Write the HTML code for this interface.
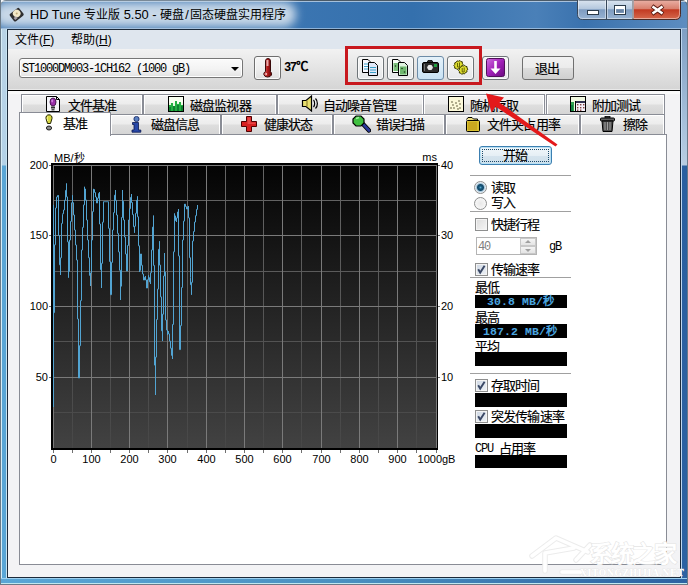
<!DOCTYPE html>
<html lang="zh-CN">
<head>
<meta charset="utf-8">
<style>
html,body{margin:0;padding:0;}
body{width:688px;height:585px;overflow:hidden;position:relative;background:#fff;font-family:"Liberation Sans",sans-serif;font-size:12px;color:#000;}
.a{position:absolute;box-sizing:border-box;}
.t{position:absolute;white-space:nowrap;line-height:1;}
.tab{border:1px solid #898c95;border-bottom:none;background:linear-gradient(180deg,#f4f4f4 0%,#ececec 45%,#dedede 50%,#d4d4d4 100%);box-shadow:inset 1px 1px 0 #fff,inset -1px 0 0 #fff;}
.chk{width:13px;height:13px;border:1px solid #8e8f8f;background:linear-gradient(135deg,#cfd8e4 0%,#eef2f6 100%);box-shadow:inset 0 0 0 1px #f4f4f4;}
.lcd{font-family:"Liberation Mono",monospace;font-weight:bold;font-size:11.5px;letter-spacing:0.1px;color:#4aa6e0;}
.tt{font-size:13px;letter-spacing:-0.85px;font-weight:500;-webkit-text-stroke:0.15px #000;}
</style>
</head>
<body>
<!-- window frame -->
<div class="a" style="left:0;top:0;width:688px;height:585px;border-radius:6px 6px 0 0;background:linear-gradient(90deg,#3a74b0 0%,#3c76b2 40%,#3470ad 60%,#4a80b8 78%,#3a72ae 85%,#5d8dc0 100%);border:1px solid #4a5a68;overflow:hidden;"></div>
<div class="a" style="left:1px;top:1px;width:686px;height:1px;background:rgba(255,255,255,0.55);border-radius:6px 6px 0 0;"></div>
<!-- title glow -->
<div class="a" style="left:-6px;top:2px;width:302px;height:25px;border-radius:12px;background:rgba(208,221,235,0.95);filter:blur(5px);"></div>
<!-- left frame lower -->
<div class="a" style="left:1px;top:29px;width:6px;height:555px;background:linear-gradient(180deg,#b9d3e6 0,#b4d2e8 136px,#5aa6d6 137px,#5aa6d6 100%);border-left:1px solid #d6ecf6;border-right:1px solid #c8e4f2;"></div>
<div class="a" style="left:0;top:0;width:1px;height:585px;background:#6a7a88;"></div>
<!-- right frame lower -->
<div class="a" style="left:681px;top:29px;width:6px;height:555px;background:linear-gradient(180deg,#7f9fc4 0,#a9c2dc 100px,#b8cde2 136px,#2a5fa0 137px,#2d62a2 100%);border-left:1px solid #c0d8f0;"></div>
<div class="a" style="left:687px;top:0;width:1px;height:585px;background:#6a7a88;"></div>
<!-- bottom frame -->
<div class="a" style="left:1px;top:578px;width:686px;height:6px;background:linear-gradient(90deg,#5aa6d6 0%,#4a90c0 50%,#2d62a2 100%);border-top:1px solid #9cd0f0;border-bottom:1px solid #c0e8f0;"></div>
<div class="a" style="left:0;top:584px;width:688px;height:1px;background:#6a7a88;"></div>
<div class="a" style="left:1px;top:28px;width:686px;height:1px;background:rgba(200,220,240,0.6);"></div>
<!-- title icon -->
<svg class="a" style="left:8px;top:6px" width="17" height="17" viewBox="0 0 17 17">
<g transform="rotate(-38 8.5 8.5)"><rect x="2.5" y="4" width="12" height="9.5" rx="1.5" fill="#2e2e30"/><circle cx="9.3" cy="7.8" r="3.8" fill="#f2e8c8"/><circle cx="9.3" cy="7.8" r="1" fill="#c0a878"/><rect x="4" y="9.5" width="3" height="2.6" fill="#a8a0a8"/></g>
</svg>
<div class="t" style="left:30px;top:9px;font-size:12px;color:#000;"><span style="font-size:12.8px">HD Tune </span>专业版<span style="font-size:12.9px"> 5.50 - </span>硬盘<span style="font-size:12.8px;margin:0 1px">/</span>固态硬盘实用程序</div>
<!-- window controls -->
<svg class="a" style="left:577px;top:0" width="106" height="21" viewBox="0 0 106 21">
<defs>
<linearGradient id="wb" x1="0" y1="0" x2="0" y2="1"><stop offset="0" stop-color="#dbe5f0"/><stop offset="0.45" stop-color="#b4c8de"/><stop offset="0.5" stop-color="#7e9cc0"/><stop offset="1" stop-color="#98b4d4"/></linearGradient>
<linearGradient id="wc" x1="0" y1="0" x2="0" y2="1"><stop offset="0" stop-color="#eab1a6"/><stop offset="0.45" stop-color="#d8806e"/><stop offset="0.5" stop-color="#c23a22"/><stop offset="1" stop-color="#d66a4e"/></linearGradient>
</defs>
<path d="M0.5 0V14.5Q0.5 19.5 5.5 19.5H56V0Z" fill="url(#wb)" stroke="#37475a"/>
<path d="M56 0H103.5V14.5Q103.5 19.5 98.5 19.5H56Z" fill="url(#wc)" stroke="#4a2a25"/>
<path d="M29.5 0V19M56 0V19" stroke="#37475a"/>
<path d="M1.5 0V14Q1.5 18.5 5.5 18.5H28.5V0M30.5 0V18.5H55.5V0M56.5 0V18.5H98.5Q102.5 18.5 102.5 14.5V0" fill="none" stroke="rgba(255,255,255,0.45)"/>
<rect x="10.5" y="10.5" width="11" height="4" fill="#fff" stroke="#2a3a4a"/>
<rect x="37.5" y="5.5" width="11" height="9" fill="none" stroke="#2a3a4a"/>
<rect x="38.5" y="6.5" width="9" height="7" fill="none" stroke="#fff" stroke-width="1"/>
<rect x="39" y="7" width="8" height="2" fill="#fff"/>
<rect x="39.5" y="9.5" width="7" height="3" fill="#6a84a4"/>
<path d="M75 6L86 14M86 6L75 14" stroke="#5a1a10" stroke-width="4.4"/>
<path d="M75.5 6.5L85.5 13.5M85.5 6.5L75.5 13.5" stroke="#fff" stroke-width="2.6"/>
</svg>
<!-- client area -->
<div class="a" style="left:7px;top:29px;width:674px;height:549px;border:1px solid #1c2a3a;background:#f3f3f5;"></div>
<!-- menu bar -->
<div class="a" style="left:8px;top:30px;width:672px;height:19px;background:#dfe6ee;"></div>
<div class="t" style="left:15px;top:34px;">文件(<u>F</u>)</div>
<div class="t" style="left:71px;top:34px;">帮助(<u>H</u>)</div>
<!-- toolbar -->
<div class="a" style="left:8px;top:49px;width:672px;height:40px;background:linear-gradient(180deg,#f2f2f2 0%,#d5d5d5 100%);"></div>
<div class="a" style="left:8px;top:89px;width:672px;height:1px;background:#e8e8e8;"></div>
<div class="a" style="left:8px;top:90px;width:672px;height:1px;background:#000;"></div>
<div class="a" style="left:8px;top:91px;width:672px;height:3px;background:#fafafa;"></div>

<!-- combo -->
<div class="a" style="left:19px;top:58px;width:224px;height:20px;border:1px solid #767676;border-radius:3px;background:linear-gradient(180deg,#fbfbfb 0%,#f2f2f2 60%,#e2e2e2 100%);box-shadow:inset 0 0 0 1px #fff;"></div>
<div class="t" style="left:22px;top:63px;font-family:'Liberation Mono',monospace;font-size:12px;letter-spacing:-1.2px;">ST1000DM003-1CH162 (1000 gB)</div>
<div class="a" style="left:231px;top:67px;width:0;height:0;border-left:4px solid transparent;border-right:4px solid transparent;border-top:4px solid #000;"></div>

<!-- thermometer button -->
<div class="a" style="left:254px;top:56px;width:27px;height:24px;border:1px solid #6e6e6e;border-radius:3px;background:linear-gradient(180deg,#f6f6f6 0%,#ececec 60%,#e0e0e0 100%);box-shadow:inset 0 0 0 1px #fafafa;"></div>
<svg class="a" style="left:260px;top:57px" width="14" height="21" viewBox="0 0 14 21">
<defs><linearGradient id="th" x1="0" y1="0" x2="1" y2="0"><stop offset="0" stop-color="#e07070"/><stop offset="0.5" stop-color="#b01818"/><stop offset="1" stop-color="#600808"/></linearGradient></defs>
<path d="M5.5 4Q5.5 1.5 8 1.5Q10.5 1.5 10.5 4V14.5Q12 16 11.5 18Q10.5 20 7.5 20Q4.5 20 3.8 17.5Q3.5 15.5 5.5 14.5Z" fill="url(#th)" stroke="#3a0a0a" stroke-width="1"/>
<rect x="6.5" y="3" width="2" height="6" fill="#f4d0d0" opacity="0.8"/>
<circle cx="6.2" cy="17" r="1" fill="#f4c0c0"/>
</svg>
<div class="t" style="left:284px;top:62px;font-family:'Liberation Mono',monospace;font-size:12px;font-weight:bold;letter-spacing:-1.5px;">37</div>
<div class="t" style="left:296px;top:61px;font-size:12.5px;font-weight:bold;">℃</div>
<!-- red rectangle -->
<div class="a" style="left:345px;top:46px;width:137px;height:39px;border:3px solid #c8181e;"></div>
<!-- toolbar buttons -->
<div class="a" style="left:357px;top:56px;width:27px;height:24px;border:1px solid #6e7478;border-radius:3px;background:linear-gradient(180deg,#f6f6f6 0%,#e6e8ea 100%);box-shadow:inset 0 0 0 1px #fafafa;"></div>
<div class="a" style="left:387px;top:56px;width:27px;height:24px;border:1px solid #6e7478;border-radius:3px;background:linear-gradient(180deg,#f6f6f6 0%,#e6e8ea 100%);box-shadow:inset 0 0 0 1px #fafafa;"></div>
<div class="a" style="left:417px;top:56px;width:27px;height:24px;border:1px solid #6d8ca8;border-radius:3px;background:linear-gradient(180deg,#e6f2fa 0%,#c8e2f4 100%);"></div>
<div class="a" style="left:447px;top:56px;width:27px;height:24px;border:1px solid #6e7478;border-radius:3px;background:linear-gradient(180deg,#f6f6f6 0%,#e6e8ea 100%);box-shadow:inset 0 0 0 1px #fafafa;"></div>
<div class="a" style="left:482px;top:56px;width:27px;height:24px;border:1px solid #6e7478;border-radius:3px;background:linear-gradient(180deg,#f6f6f6 0%,#e6e8ea 100%);box-shadow:inset 0 0 0 1px #fafafa;"></div>
<!-- exit button -->
<div class="a" style="left:522px;top:56px;width:52px;height:24px;border:1px solid #707070;border-radius:3px;background:linear-gradient(180deg,#f2f2f2 0%,#ebebeb 50%,#dddddd 51%,#cfcfcf 100%);"></div>
<div class="t tt" style="left:535px;top:62px;">退出</div>


<!-- tabs row 1 -->
<div class="a tab" style="left:21px;top:94px;width:122px;height:21px;"></div>
<div class="a tab" style="left:143px;top:94px;width:134px;height:21px;"></div>
<div class="a tab" style="left:277px;top:94px;width:147px;height:21px;"></div>
<div class="a tab" style="left:423px;top:94px;width:122px;height:21px;"></div>
<div class="a tab" style="left:546px;top:94px;width:119px;height:21px;"></div>
<div class="t tt" style="left:68px;top:99px;">文件基准</div>
<div class="t tt" style="left:190px;top:99px;">磁盘监视器</div>
<div class="t tt" style="left:323px;top:99px;">自动噪音管理</div>
<div class="t tt" style="left:470px;top:99px;">随机存取</div>
<div class="t tt" style="left:592px;top:99px;">附加测试</div>
<!-- tabs row 2 -->
<div class="a tab" style="left:110px;top:114px;width:111px;height:21px;"></div>
<div class="a tab" style="left:221px;top:114px;width:112px;height:21px;"></div>
<div class="a tab" style="left:333px;top:114px;width:112px;height:21px;"></div>
<div class="a tab" style="left:445px;top:114px;width:135px;height:21px;"></div>
<div class="a tab" style="left:580px;top:114px;width:85px;height:21px;"></div>
<div class="t tt" style="left:151px;top:118px;">磁盘信息</div>
<div class="t tt" style="left:264px;top:118px;">健康状态</div>
<div class="t tt" style="left:376px;top:118px;">错误扫描</div>
<div class="t tt" style="left:487px;top:118px;">文件夹占用率</div>
<div class="t tt" style="left:623px;top:118px;">擦除</div>
<!-- panel -->
<div class="a" style="left:19px;top:134px;width:648px;height:431px;border:1px solid #898c95;background:#fff;"></div>
<!-- selected tab -->
<div class="a" style="left:19px;top:112px;width:92px;height:24px;border:1px solid #898c95;border-bottom:none;background:#fff;"></div>
<div class="t tt" style="left:63px;top:117px;">基准</div>



<!-- tab icons -->
<svg class="a" style="left:46px;top:96px" width="15" height="16" viewBox="0 0 15 16">
<path d="M0.5 0.5H10.5L13.5 3.5V15.5H0.5Z" fill="#f4f4f8" stroke="#000"/><path d="M10.5 0.5V3.5H13.5" fill="none" stroke="#000"/>
<ellipse cx="7" cy="6" rx="3" ry="4" fill="#9a30a8" stroke="#300838" stroke-width="0.8"/><ellipse cx="6.2" cy="4.8" rx="1" ry="1.6" fill="#d080e0"/>
<rect x="5" y="10.5" width="4" height="2" fill="#303030"/><rect x="5.5" y="13" width="3" height="1.5" fill="#505050"/>
</svg>
<svg class="a" style="left:168px;top:96px" width="16" height="16" viewBox="0 0 16 16">
<rect x="0.5" y="0.5" width="15" height="15" fill="#eaf8e0" stroke="#000"/>
<rect x="1" y="1" width="14" height="6" fill="#f8fff0"/>
<path d="M1 9H3V7H5V10H7V5H9V8H11V6H13V9H15V15H1Z" fill="#22b040"/>
<path d="M1 11H3V15H1ZM5 10H7V15H5ZM9 9H11V15H9ZM13 10H15V15H13Z" fill="#108030"/>
</svg>
<svg class="a" style="left:301px;top:95px" width="18" height="17" viewBox="0 0 18 17">
<path d="M1.5 5.5H5L10.5 1V16L5 11.5H1.5Z" fill="#e8e070" stroke="#000" stroke-width="1.2"/>
<path d="M6 5.5V11.5" stroke="#807020" stroke-width="1"/>
<path d="M12.5 5C14 6.5 14 10.5 12.5 12" fill="none" stroke="#000" stroke-width="1.2"/>
<path d="M14.5 3.5C17 6 17 11 14.5 13.5" fill="none" stroke="#000" stroke-width="1.2"/>
</svg>
<svg class="a" style="left:448px;top:96px" width="16" height="16" viewBox="0 0 16 16">
<rect x="0.5" y="0.5" width="15" height="15" fill="#fbf8d8" stroke="#000"/>
<g fill="#2a2408"><circle cx="3" cy="12" r="0.65"/><circle cx="5" cy="9" r="0.65"/><circle cx="6" cy="12" r="0.65"/><circle cx="8" cy="7" r="0.65"/><circle cx="9" cy="10" r="0.65"/><circle cx="11" cy="5" r="0.65"/><circle cx="12" cy="8" r="0.65"/><circle cx="12" cy="12" r="0.65"/><circle cx="10" cy="13" r="0.65"/><circle cx="4" cy="6" r="0.65"/></g>
</svg>
<svg class="a" style="left:570px;top:96px" width="16" height="16" viewBox="0 0 16 16">
<rect x="0.5" y="0.5" width="15" height="15" fill="#f0f8e0" stroke="#000"/>
<path d="M1 6H4V15H1Z" fill="#30a050"/><path d="M1 9H3V15H1Z" fill="#108040"/>
<rect x="5.5" y="5.5" width="10" height="10" fill="#f4f0f8" stroke="#000"/><rect x="6" y="5" width="9" height="2" fill="#303050"/>
<g fill="#804040"><rect x="7" y="8" width="1.4" height="1.4"/><rect x="10" y="8" width="1.4" height="1.4"/><rect x="13" y="8" width="1.4" height="1.4"/><rect x="7" y="11" width="1.4" height="1.4"/><rect x="10" y="11" width="1.4" height="1.4"/><rect x="13" y="11" width="1.4" height="1.4"/><rect x="7" y="13.5" width="1.4" height="1.4"/><rect x="10" y="13.5" width="1.4" height="1.4"/></g>
</svg>
<svg class="a" style="left:45px;top:114px" width="8" height="17" viewBox="0 0 8 17">
<path d="M4 0.8C6.2 0.8 7.3 2.5 7 4.5L5.5 9.5H2.5L1 4.5C0.7 2.5 1.8 0.8 4 0.8Z" fill="#d8d840" stroke="#202000" stroke-width="1"/>
<path d="M3 2.5C2 3 2.2 5 2.8 7" stroke="#f8f8a0" stroke-width="1" fill="none"/>
<ellipse cx="4" cy="14" rx="2.6" ry="2" fill="#909090" stroke="#202020" stroke-width="1"/>
</svg>
<svg class="a" style="left:131px;top:116px" width="11" height="17" viewBox="0 0 11 17">
<circle cx="5.5" cy="3" r="2.6" fill="#5a80c0" stroke="#102060" stroke-width="0.8"/>
<path d="M1.5 6.5H7.5V14H9.8V16.2H1V14H3V8.5H1.5Z" fill="#2848a8" stroke="#0a1850" stroke-width="0.8"/>
</svg>
<svg class="a" style="left:240px;top:116px" width="18" height="16" viewBox="0 0 18 16">
<path d="M6.5 0.5H11.5V5.5H16.5V10.5H11.5V15.5H6.5V10.5H1.5V5.5H6.5Z" fill="#d82020" stroke="#500000" stroke-width="1"/>
<path d="M7.5 1.5H10.5V6.5H15.5V8H7.5Z" fill="#f06060" opacity="0.6"/>
</svg>
<svg class="a" style="left:352px;top:115px" width="19" height="18" viewBox="0 0 19 18">
<path d="M11 9L17 15.5" stroke="#000" stroke-width="4.4" stroke-linecap="round"/>
<path d="M11 9L17 15.5" stroke="#2a3a9a" stroke-width="2.6" stroke-linecap="round"/>
<path d="M4 1H9L12 4V8L9 11H4L1 8V4Z" fill="#40c040" stroke="#000" stroke-width="1.2"/>
<path d="M4 3.5L7 2.5" stroke="#a0f0a0" stroke-width="1.5"/>
</svg>
<svg class="a" style="left:465px;top:116px" width="16" height="16" viewBox="0 0 16 16">
<path d="M1.5 3.5L3 1.5H7L8.5 3H12.5V5" fill="#f0e080" stroke="#000" stroke-width="1"/>
<rect x="1.5" y="4.5" width="13" height="11" rx="1" fill="#d8c030" stroke="#000" stroke-width="1"/>
<rect x="3" y="6" width="9" height="8" fill="#c8a820"/>
</svg>
<svg class="a" style="left:600px;top:116px" width="15" height="16" viewBox="0 0 15 16">
<rect x="5" y="0.5" width="5" height="2" fill="#404040" stroke="#000" stroke-width="0.8"/>
<rect x="0.5" y="2" width="14" height="3" rx="1" fill="#606060" stroke="#000" stroke-width="1"/>
<path d="M2 5H13L12 15.5H3Z" fill="#505050" stroke="#000" stroke-width="1"/>
<path d="M5 6V14M7.5 6V14M10 6V14" stroke="#a0a0a0" stroke-width="1"/>
</svg>
<!-- toolbar icons -->
<svg class="a" style="left:362px;top:59px" width="17" height="17" viewBox="0 0 17 17">
<path d="M0.5 0.5H6L8 2.5V13.5H0.5Z" fill="#f8f8ff" stroke="#000"/>
<path d="M2 5H6.5M2 7.5H6.5M2 10H6.5" stroke="#3aa0c8" stroke-width="1.2"/>
<path d="M6.5 3.5H12.5L15.5 6.5V16.5H6.5Z" fill="#e0e8f8" stroke="#000"/>
<path d="M8 8.5H14M8 11H14M8 13.5H14" stroke="#3aa0c8" stroke-width="1.2"/>
</svg>
<svg class="a" style="left:392px;top:59px" width="17" height="17" viewBox="0 0 17 17">
<path d="M0.5 0.5H6L8 2.5V13.5H0.5Z" fill="#f8fff8" stroke="#000"/>
<rect x="1.5" y="4" width="5" height="8" fill="#7cc07c"/><circle cx="3.5" cy="7" r="0.8" fill="#204020"/>
<path d="M6.5 3.5H12.5L15.5 6.5V16.5H6.5Z" fill="#e0f4e0" stroke="#000"/>
<rect x="8" y="7.5" width="6.5" height="8" fill="#70b870"/><circle cx="10" cy="9.5" r="0.8" fill="#204020"/><circle cx="12.5" cy="13" r="0.8" fill="#204020"/>
</svg>
<svg class="a" style="left:422px;top:60px" width="17" height="14" viewBox="0 0 17 14">
<path d="M5 2.5L6 0.5H10L11 2.5Z" fill="#303030" stroke="#000" stroke-width="0.8"/>
<rect x="0.5" y="2.5" width="16" height="10" rx="1.5" fill="#2a2a2a" stroke="#000"/>
<circle cx="8" cy="7.5" r="3.3" fill="#e8e8e8" stroke="#000" stroke-width="0.8"/>
<rect x="12" y="4" width="3" height="3" fill="#20a040"/>
<rect x="2" y="4" width="1" height="7" fill="#707070"/>
</svg>
<svg class="a" style="left:452px;top:59px" width="18" height="17" viewBox="0 0 18 17">
<polygon points="10.3,2.8 10.3,4.3 11.2,5.3 10.2,6.6 10.3,8.1 8.8,8.7 7.9,10.1 6.4,9.8 5.0,10.5 4.1,9.4 2.7,9.2 2.7,7.7 1.8,6.7 2.8,5.4 2.7,3.9 4.2,3.3 5.1,1.9 6.6,2.2 8.0,1.5 8.9,2.6" fill="#dede30" stroke="#3a3a00" stroke-width="1"/>
<path d="M5.5 4V8H7.5V3.5" stroke="#5a5a00" stroke-width="0.9" fill="none"/>
<polygon points="15.0,7.6 15.0,9.1 15.9,10.1 14.9,11.4 15.0,12.9 13.5,13.5 12.6,14.9 11.1,14.6 9.7,15.3 8.8,14.2 7.4,14.0 7.4,12.5 6.5,11.5 7.5,10.2 7.4,8.7 8.9,8.1 9.8,6.7 11.3,7.0 12.7,6.3 13.6,7.4" fill="#dede30" stroke="#3a3a00" stroke-width="1"/>
<path d="M10.2 9V13H12.2V8.5" stroke="#5a5a00" stroke-width="0.9" fill="none"/>
</svg>
<svg class="a" style="left:486px;top:58px" width="19" height="19" viewBox="0 0 19 19">
<defs><linearGradient id="pg" x1="0" y1="0" x2="1" y2="1"><stop offset="0" stop-color="#d070e0"/><stop offset="0.5" stop-color="#a020b8"/><stop offset="1" stop-color="#6a0a80"/></linearGradient></defs>
<rect x="0.5" y="0.5" width="18" height="18" rx="2" fill="url(#pg)" stroke="#50105a"/>
<path d="M8.2 3H10.8V10.5H14.5L9.5 16L4.5 10.5H8.2Z" fill="#fff"/>
</svg>
<!-- red arrow -->
<svg class="a" style="left:0;top:0" width="688" height="585" viewBox="0 0 688 585">
<path d="M486 93.5L504 97.5L499.5 102.5L557.5 144.5L555.5 146.5L495.5 106.5L491.5 112.5Z" fill="#e3191b"/>
</svg>
<!-- right panel -->
<div class="a" style="left:479px;top:146px;width:73px;height:19px;border:1px solid #3c7fb1;border-radius:3px;background:linear-gradient(180deg,#f2f7fa 0%,#e6eff5 50%,#d6e4ee 51%,#cfdfea 100%);box-shadow:inset 0 0 0 1px #b8e0f4;"></div>
<div class="a" style="left:482px;top:149px;width:67px;height:13px;border:1px dotted #1a4a6a;"></div>
<div class="t tt" style="left:503px;top:149px;">开始</div>
<div class="a" style="left:470px;top:175px;width:101px;height:1px;background:#a0a0a0;"></div>
<div class="a" style="left:474px;top:181px;width:13px;height:13px;border-radius:50%;border:1px solid #8e8f8f;background:radial-gradient(circle at 50% 50%,#5aaccc 0,#1a5a80 1.5px,#154a6a 3px,#a8c8dc 4px,#e0eaf2 5px,#f4f4f4 6px);"></div>
<div class="t tt" style="left:491px;top:181px;">读取</div>
<div class="a" style="left:474px;top:197px;width:13px;height:13px;border-radius:50%;border:1px solid #8e8f8f;background:radial-gradient(circle at 50% 50%,#e8e8e8 0,#f8f8f8 6px);"></div>
<div class="t tt" style="left:491px;top:196px;">写入</div>
<div class="a" style="left:470px;top:211px;width:101px;height:1px;background:#a0a0a0;"></div>
<div class="a" style="left:475px;top:218px;width:13px;height:13px;border:1px solid #8e8f8f;background:linear-gradient(135deg,#dcdcdc 0%,#f6f6f6 100%);box-shadow:inset 0 0 0 1px #f4f4f4;"></div>
<div class="t tt" style="left:491px;top:218px;">快捷行程</div>
<div class="a" style="left:476px;top:237px;width:61px;height:18px;border:1px solid #b4b4b4;background:#fff;"></div>
<div class="t" style="left:478px;top:241px;font-family:'Liberation Mono',monospace;font-size:12px;letter-spacing:-1.2px;color:#808080;">40</div>
<div class="a" style="left:520px;top:238px;width:16px;height:8px;border:1px solid #c8c8c8;background:linear-gradient(180deg,#f4f4f4,#e4e4e4);"></div>
<div class="a" style="left:520px;top:246px;width:16px;height:8px;border:1px solid #c8c8c8;background:linear-gradient(180deg,#f4f4f4,#e4e4e4);"></div>
<div class="a" style="left:525px;top:240px;width:0;height:0;border-left:3px solid transparent;border-right:3px solid transparent;border-bottom:3px solid #a0a0a0;"></div>
<div class="a" style="left:525px;top:249px;width:0;height:0;border-left:3px solid transparent;border-right:3px solid transparent;border-top:3px solid #a0a0a0;"></div>
<div class="t" style="left:549px;top:241px;font-family:'Liberation Mono',monospace;font-size:12px;letter-spacing:-1.2px;">gB</div>
<div class="a chk" style="left:475px;top:263px;"><svg width="11" height="11" viewBox="0 0 11 11" style="position:absolute;left:0;top:0"><path d="M2.2 5.2L4.2 8.6L8.6 1.8" fill="none" stroke="#3a4866" stroke-width="1.9" stroke-linejoin="miter"/></svg></div>
<div class="t tt" style="left:491px;top:263px;">传输速率</div>
<div class="a" style="left:470px;top:277px;width:101px;height:1px;background:#a0a0a0;"></div>
<div class="t tt" style="left:475px;top:281px;">最低</div>
<div class="a" style="left:475px;top:295px;width:92px;height:13px;background:#000;"></div>
<div class="t lcd" style="left:487px;top:296px;">30.8 MB/秒</div>
<div class="t tt" style="left:475px;top:311px;">最高</div>
<div class="a" style="left:475px;top:324px;width:92px;height:14px;background:#000;"></div>
<div class="t lcd" style="left:483px;top:326px;">187.2 MB/秒</div>
<div class="t tt" style="left:475px;top:340px;">平均</div>
<div class="a" style="left:475px;top:352px;width:92px;height:14px;background:#000;"></div>
<div class="a" style="left:470px;top:373px;width:101px;height:1px;background:#a0a0a0;"></div>
<div class="a chk" style="left:475px;top:379px;"><svg width="11" height="11" viewBox="0 0 11 11" style="position:absolute;left:0;top:0"><path d="M2.2 5.2L4.2 8.6L8.6 1.8" fill="none" stroke="#3a4866" stroke-width="1.9" stroke-linejoin="miter"/></svg></div>
<div class="t tt" style="left:491px;top:379px;">存取时间</div>
<div class="a" style="left:475px;top:393px;width:92px;height:14px;background:#000;"></div>
<div class="a chk" style="left:475px;top:410px;"><svg width="11" height="11" viewBox="0 0 11 11" style="position:absolute;left:0;top:0"><path d="M2.2 5.2L4.2 8.6L8.6 1.8" fill="none" stroke="#3a4866" stroke-width="1.9" stroke-linejoin="miter"/></svg></div>
<div class="t tt" style="left:491px;top:410px;">突发传输速率</div>
<div class="a" style="left:475px;top:424px;width:92px;height:14px;background:#000;"></div>
<div class="t" style="left:475px;top:443px;font-family:'Liberation Mono',monospace;font-size:12px;letter-spacing:-1.2px;">CPU</div>
<div class="t tt" style="left:499px;top:442px;">占用率</div>
<div class="a" style="left:475px;top:455px;width:92px;height:13px;background:#000;"></div>
<!-- chart -->
<svg class="a" style="left:0;top:0" width="688" height="585" viewBox="0 0 688 585">
<defs><linearGradient id="mg" gradientUnits="userSpaceOnUse" x1="0" y1="165" x2="0" y2="448"><stop offset="0" stop-color="#666"/><stop offset="1" stop-color="#474747"/></linearGradient><linearGradient id="bg" x1="0" y1="0" x2="0" y2="1"><stop offset="0" stop-color="#040404"/><stop offset="1" stop-color="#424242"/></linearGradient></defs>
<rect x="51" y="163" width="387" height="287" fill="#000"/>
<rect x="53" y="165" width="384" height="283" fill="url(#bg)"/>
<path d="M72.5 165V448 M110.5 165V448 M148.5 165V448 M187.5 165V448 M225.5 165V448 M263.5 165V448 M301.5 165V448 M340.5 165V448 M378.5 165V448 M416.5 165V448 M53 200.5H437 M53 271.5H437 M53 341.5H437 M53 412.5H437" stroke="url(#mg)" stroke-width="1" fill="none"/><path d="M53.5 165V448 M91.5 165V448 M129.5 165V448 M167.5 165V448 M206.5 165V448 M244.5 165V448 M282.5 165V448 M321.5 165V448 M359.5 165V448 M397.5 165V448 M436.5 165V448 M53 165.5H437 M53 235.5H437 M53 306.5H437 M53 377.5H437" stroke="#7a7a7a" stroke-width="1" fill="none"/>
<path d="M53.5 450V453 M72.5 450V453 M91.5 450V453 M110.5 450V453 M129.5 450V453 M148.5 450V453 M167.5 450V453 M187.5 450V453 M206.5 450V453 M225.5 450V453 M244.5 450V453 M263.5 450V453 M282.5 450V453 M301.5 450V453 M321.5 450V453 M340.5 450V453 M359.5 450V453 M378.5 450V453 M397.5 450V453 M416.5 450V453 M436.5 450V453 M49 165.5H51 M438 165.5H440 M49 235.5H51 M438 235.5H440 M49 306.5H51 M438 306.5H440 M49 377.5H51 M438 377.5H440 " stroke="#707070" stroke-width="1" fill="none"/>
<path d="M51 163H438M51 164H438M51 163V450M52 163V450M51 448H438M51 449H438M437.5 163V450" stroke="#000" stroke-width="1" fill="none" shape-rendering="crispEdges"/>
<!--poly 53.5,407.0 54.3,256.0 55.3,240.0 55.6,218.0 56.4,198.0 58.1,195.3 58.6,215.0 59.4,256.0 60.7,275.0 61.5,229.0 62.8,214.5 64.0,210.0 66.7,183.5 68.8,277.6 70.0,240.0 72.4,195.3 74.0,215.0 77.0,260.0 79.0,378.0 80.3,336.0 82.0,250.0 84.8,186.8 86.0,200.0 88.0,240.0 90.6,286.0 92.0,240.0 93.8,188.9 95.5,194.0 97.0,203.0 99.3,192.0 101.4,288.0 103.5,201.7 108.2,201.7 111.0,294.7 113.0,230.0 115.3,190.0 117.0,215.0 120.2,274.0 120.8,300.0 122.4,190.0 124.0,220.0 127.0,271.0 129.0,220.0 131.3,194.0 134.5,232.7 137.3,196.4 139.9,272.0 141.0,254.0 142.5,271.0 144.0,280.0 145.5,276.0 147.0,288.0 148.5,275.5 150.5,284.0 152.0,250.0 153.5,215.6 155.3,395.0 156.5,330.0 157.5,309.0 159.2,241.3 160.5,280.0 162.3,341.0 164.6,253.0 166.0,320.0 167.5,335.0 168.6,331.0 172.5,359.0 173.5,290.0 174.5,213.5 176.3,222.0 178.5,209.0 180.0,349.6 181.4,316.0 183.0,240.0 184.9,204.0 187.0,209.0 188.7,206.0 190.5,277.6 191.7,294.7 193.0,241.0 195.0,222.0 197.7,205.0 --><path d="M53.5 205.0 L53.5 205.0 L53.5 407.0 L53.5 312.6 L54.5 312.6 L54.5 256.0 L54.5 244.8 L55.5 244.8 L55.5 240.0 L55.5 218.0 L55.5 208.0 L56.5 208.0 L56.5 198.0 L56.5 197.0 L57.5 197.0 L57.5 195.5 L58.5 195.5 L58.5 195.3 L58.5 215.0 L58.5 235.5 L59.5 235.5 L59.5 256.0 L59.5 264.8 L60.5 264.8 L60.5 275.0 L60.5 257.8 L61.5 257.8 L61.5 229.0 L61.5 223.4 L62.5 223.4 L62.5 214.5 L62.5 213.8 L63.5 213.8 L63.5 210.0 L64.5 210.0 L64.5 200.2 L65.5 200.2 L65.5 190.4 L66.5 190.4 L66.5 183.5 L66.5 196.9 L67.5 196.9 L67.5 241.8 L68.5 241.8 L68.5 277.6 L68.5 271.3 L69.5 271.3 L69.5 240.0 L70.5 240.0 L70.5 221.4 L71.5 221.4 L71.5 202.8 L72.5 202.8 L72.5 195.3 L72.5 202.7 L73.5 202.7 L73.5 215.0 L74.5 215.0 L74.5 230.0 L75.5 230.0 L75.5 245.0 L76.5 245.0 L76.5 260.0 L77.5 260.0 L77.5 319.0 L78.5 319.0 L78.5 378.0 L79.5 378.0 L79.5 345.7 L80.5 345.7 L80.5 336.0 L80.5 300.6 L81.5 300.6 L81.5 250.0 L82.5 250.0 L82.5 227.4 L83.5 227.4 L83.5 204.9 L84.5 204.9 L84.5 186.8 L84.5 189.0 L85.5 189.0 L85.5 200.0 L86.5 200.0 L86.5 220.0 L87.5 220.0 L87.5 240.0 L88.5 240.0 L88.5 257.7 L89.5 257.7 L89.5 275.4 L90.5 275.4 L90.5 286.0 L90.5 272.9 L91.5 272.9 L91.5 240.0 L92.5 240.0 L92.5 211.6 L93.5 211.6 L93.5 188.9 L93.5 189.5 L94.5 189.5 L94.5 192.5 L95.5 192.5 L95.5 194.0 L95.5 197.0 L96.5 197.0 L96.5 203.0 L97.5 203.0 L97.5 198.2 L98.5 198.2 L98.5 193.4 L99.5 193.4 L99.5 192.0 L99.5 224.0 L100.5 224.0 L100.5 269.7 L101.5 269.7 L101.5 288.0 L101.5 263.3 L102.5 263.3 L102.5 222.2 L103.5 222.2 L103.5 201.7 L104.5 201.7 L105.5 201.7 L106.5 201.7 L107.5 201.7 L108.5 201.7 L108.5 228.3 L109.5 228.3 L109.5 261.5 L110.5 261.5 L110.5 294.7 L111.5 294.7 L111.5 262.4 L112.5 262.4 L112.5 230.0 L113.5 230.0 L113.5 212.6 L114.5 212.6 L114.5 195.2 L115.5 195.2 L115.5 190.0 L115.5 200.3 L116.5 200.3 L116.5 215.0 L117.5 215.0 L117.5 233.4 L118.5 233.4 L118.5 251.9 L119.5 251.9 L119.5 270.3 L120.5 270.3 L120.5 274.0 L120.5 300.0 L120.5 286.2 L121.5 286.2 L121.5 217.5 L122.5 217.5 L122.5 190.0 L122.5 201.2 L123.5 201.2 L123.5 220.0 L124.5 220.0 L124.5 237.0 L125.5 237.0 L125.5 254.0 L126.5 254.0 L126.5 271.0 L127.5 271.0 L127.5 245.5 L128.5 245.5 L128.5 220.0 L129.5 220.0 L129.5 208.7 L130.5 208.7 L130.5 197.4 L131.5 197.4 L131.5 194.0 L131.5 202.5 L132.5 202.5 L132.5 214.6 L133.5 214.6 L133.5 226.7 L134.5 226.7 L134.5 232.7 L134.5 226.2 L135.5 226.2 L135.5 213.3 L136.5 213.3 L136.5 200.3 L137.5 200.3 L137.5 196.4 L137.5 216.8 L138.5 216.8 L138.5 245.8 L139.5 245.8 L139.5 272.0 L139.5 270.4 L140.5 270.4 L140.5 254.0 L141.5 254.0 L141.5 265.3 L142.5 265.3 L142.5 271.0 L142.5 274.0 L143.5 274.0 L143.5 280.0 L144.5 280.0 L144.5 277.3 L145.5 277.3 L145.5 276.0 L145.5 280.0 L146.5 280.0 L146.5 288.0 L147.5 288.0 L147.5 279.7 L148.5 279.7 L148.5 275.5 L148.5 277.6 L149.5 277.6 L149.5 281.9 L150.5 281.9 L150.5 284.0 L150.5 272.7 L151.5 272.7 L151.5 250.0 L152.5 250.0 L152.5 227.1 L153.5 227.1 L153.5 215.6 L153.5 265.4 L154.5 265.4 L154.5 365.1 L155.5 365.1 L155.5 395.0 L155.5 357.1 L156.5 357.1 L156.5 330.0 L156.5 319.5 L157.5 319.5 L157.5 309.0 L157.5 289.1 L158.5 289.1 L158.5 249.3 L159.5 249.3 L159.5 241.3 L159.5 265.1 L160.5 265.1 L160.5 280.0 L160.5 296.9 L161.5 296.9 L161.5 330.8 L162.5 330.8 L162.5 341.0 L162.5 314.2 L163.5 314.2 L163.5 276.0 L164.5 276.0 L164.5 253.0 L164.5 272.1 L165.5 272.1 L165.5 320.0 L166.5 320.0 L166.5 330.0 L167.5 330.0 L167.5 335.0 L167.5 333.2 L168.5 333.2 L168.5 331.0 L168.5 333.9 L169.5 333.9 L169.5 341.1 L170.5 341.1 L170.5 348.2 L171.5 348.2 L171.5 355.4 L172.5 355.4 L172.5 359.0 L172.5 324.5 L173.5 324.5 L173.5 290.0 L173.5 251.8 L174.5 251.8 L174.5 213.5 L174.5 215.9 L175.5 215.9 L175.5 220.6 L176.5 220.6 L176.5 222.0 L176.5 217.9 L177.5 217.9 L177.5 212.0 L178.5 212.0 L178.5 209.0 L178.5 255.9 L179.5 255.9 L179.5 349.6 L180.5 349.6 L180.5 325.6 L181.5 325.6 L181.5 316.0 L181.5 287.5 L182.5 287.5 L182.5 240.0 L183.5 240.0 L183.5 221.1 L184.5 221.1 L184.5 204.0 L184.5 204.2 L185.5 204.2 L185.5 206.6 L186.5 206.6 L186.5 209.0 L187.5 209.0 L187.5 207.2 L188.5 207.2 L188.5 206.0 L188.5 217.9 L189.5 217.9 L189.5 257.7 L190.5 257.7 L190.5 277.6 L190.5 284.7 L191.5 284.7 L191.5 294.7 L191.5 282.3 L192.5 282.3 L192.5 241.0 L193.5 241.0 L193.5 231.5 L194.5 231.5 L194.5 222.0 L195.5 222.0 L195.5 215.7 L196.5 215.7 L196.5 209.4 L197.5 209.4 L197.5 205.0" stroke="#52a4d2" stroke-width="1" fill="none" stroke-linejoin="miter"/>
<g font-family="Liberation Sans" font-size="11" fill="#000"><text x="48" y="168.5" text-anchor="end">200</text><text x="48" y="238.5" text-anchor="end">150</text><text x="48" y="309.5" text-anchor="end">100</text><text x="48" y="380.5" text-anchor="end">50</text><text x="441" y="168.5">40</text><text x="441" y="238.5">30</text><text x="441" y="309.5">20</text><text x="441" y="380.5">10</text><text x="53.5" y="463" text-anchor="middle">0</text><text x="91.5" y="463" text-anchor="middle">100</text><text x="129.5" y="463" text-anchor="middle">200</text><text x="167.5" y="463" text-anchor="middle">300</text><text x="206.5" y="463" text-anchor="middle">400</text><text x="244.5" y="463" text-anchor="middle">500</text><text x="282.5" y="463" text-anchor="middle">600</text><text x="321.5" y="463" text-anchor="middle">700</text><text x="359.5" y="463" text-anchor="middle">800</text><text x="397.5" y="463" text-anchor="middle">900</text><text x="436.5" y="463" text-anchor="middle">1000gB</text><text x="54" y="162">MB/秒</text><text x="437" y="161" text-anchor="end">ms</text></g>
</svg>
<!-- watermark -->
<svg class="a" style="left:0;top:0" width="688" height="585" viewBox="0 0 688 585">
<g fill="none" stroke="#ececec" stroke-width="5.5" stroke-linejoin="round" stroke-linecap="round">
<path d="M532 556L556 538L588 552M545 571V553L574 548M562 572H584M576 560L590 545"/>
</g>
<g fill="none" stroke="#fff" stroke-width="3.5" stroke-linejoin="round" stroke-linecap="round">
<path d="M532 556L556 538L588 552M545 571V553L574 548M562 572H584M576 560L590 545"/>
</g>
<g font-family="Liberation Sans" font-weight="bold">
<text x="590" y="562" font-size="23" letter-spacing="-1.8" fill="#fff" stroke="#e4e4e4" stroke-width="1.2" paint-order="stroke">系统之家</text>
<text x="580" y="576" font-size="9.5" font-family="Liberation Serif" letter-spacing="0.7" fill="#fff" stroke="#e0e0e0" stroke-width="0.6" paint-order="stroke">XITONGZHIJIA.NET</text>
</g>
</svg>
</body>
</html>
